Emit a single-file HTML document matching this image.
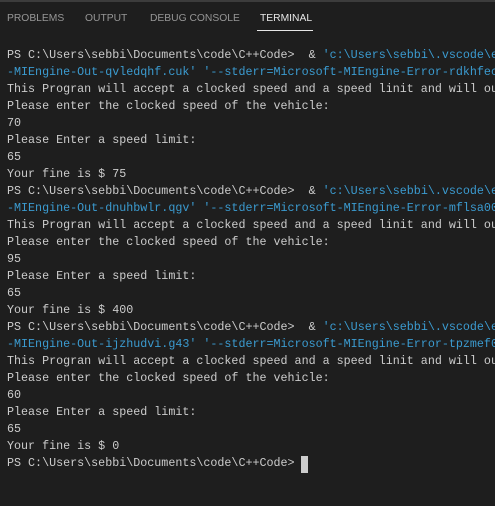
<!DOCTYPE html>
<html><head><meta charset="utf-8"><style>
html,body{margin:0;padding:0;background:#1e1e1e;width:495px;height:506px;overflow:hidden}
.top{position:absolute;left:0;top:0;width:495px;height:2px;background:#3c3c3c}
.tabs{position:absolute;top:13px;left:7px;font:10.3px "Liberation Sans",sans-serif;color:#969696;white-space:nowrap}
.tabs span{position:absolute;top:0}
.act{color:#e7e7e7}
.ul{position:absolute;left:257px;top:30px;width:56px;height:1px;background:#e7e7e7}
pre{position:absolute;left:7px;top:47px;margin:0;font:11.7px/17px "Liberation Mono",monospace;color:#cccccc;white-space:pre}
.s{color:#3b9bd0}
.cur{position:absolute;left:301px;top:456px;width:7px;height:17px;background:#cccccc}
</style></head><body>
<div class="top"></div>
<div class="tabs"><span style="left:0">PROBLEMS</span><span style="left:78px">OUTPUT</span><span style="left:143px">DEBUG CONSOLE</span><span class="act" style="left:253px">TERMINAL</span></div>
<div class="ul"></div>
<pre>PS C:\Users\sebbi\Documents\code\C++Code>  &amp; <span class="s">'c:\Users\sebbi\.vscode\e</span>
<span class="s">-MIEngine-Out-qvledqhf.cuk' '--stderr=Microsoft-MIEngine-Error-rdkhfec</span>
This Progran will accept a clocked speed and a speed linit and will ou
Please enter the clocked speed of the vehicle:
70
Please Enter a speed limit:
65
Your fine is $ 75
PS C:\Users\sebbi\Documents\code\C++Code>  &amp; <span class="s">'c:\Users\sebbi\.vscode\e</span>
<span class="s">-MIEngine-Out-dnuhbwlr.qgv' '--stderr=Microsoft-MIEngine-Error-mflsa00</span>
This Progran will accept a clocked speed and a speed linit and will ou
Please enter the clocked speed of the vehicle:
95
Please Enter a speed limit:
65
Your fine is $ 400
PS C:\Users\sebbi\Documents\code\C++Code>  &amp; <span class="s">'c:\Users\sebbi\.vscode\e</span>
<span class="s">-MIEngine-Out-ijzhudvi.g43' '--stderr=Microsoft-MIEngine-Error-tpzmef0</span>
This Progran will accept a clocked speed and a speed linit and will ou
Please enter the clocked speed of the vehicle:
60
Please Enter a speed limit:
65
Your fine is $ 0
PS C:\Users\sebbi\Documents\code\C++Code></pre>
<div class="cur"></div>
</body></html>
